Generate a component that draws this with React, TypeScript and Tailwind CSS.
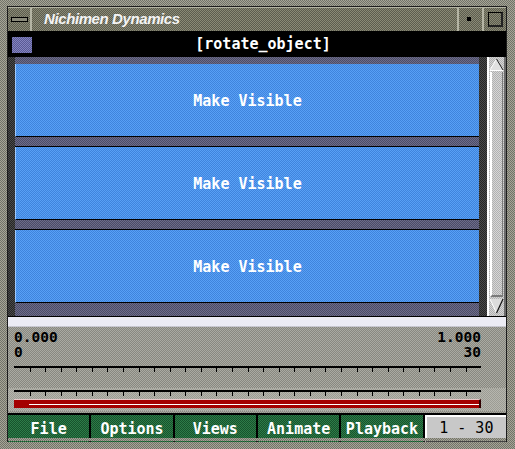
const frameBg =
  "bg-[image:repeating-conic-gradient(#a6a696_0_25%,#72726a_0_50%)] bg-[length:2px_2px]";

const Ruler = () => {
  const ticks = Array.from({ length: 29 }, (_, i) => Math.round((i + 1) * 15.57));
  return (
    <svg width="467" height="6" className="block">
      <rect x="0" y="0" width="467" height="2" fill="#000" />
      {ticks.map((x) => (
        <rect key={x} x={x} y="2" width="1" height="4" fill="#000" />
      ))}
    </svg>
  );
};

const VisibleButton = () => (
  <div className="h-[73px] pt-[3px] border-b border-black border-l border-l-[#9cc8ff] bg-[image:repeating-conic-gradient(#58a0f6_0_25%,#3f84dc_0_50%)] bg-[length:2px_2px] flex items-center justify-center">
    <span className="text-white text-[15px] font-bold font-['DejaVu_Sans_Mono',monospace]">
      Make Visible
    </span>
  </div>
);

const Separator = ({ h }: { h: string }) => (
  <div
    className={`${h} border-b border-black bg-[image:repeating-conic-gradient(#6c6c8a_0_25%,#4c4c66_0_50%)] bg-[length:2px_2px]`}
  />
);

const MenuButton = ({ label }: { label: string }) => (
  <div className="flex items-center justify-center pt-[1px] bg-[image:repeating-conic-gradient(#2e7c48_0_25%,#17522c_0_50%)] bg-[length:2px_2px]">
    <span className="text-white text-[15px] font-bold font-['DejaVu_Sans_Mono',monospace]">
      {label}
    </span>
  </div>
);

export default function App() {
  return (
    <div className={`w-[515px] h-[449px] pt-[6px] pl-[7px] pr-[8px] pb-[7px] ${frameBg}`}>
      <div className="w-[500px] h-[436px] border border-[#1c1c1c] flex flex-col">
        {/* title bar */}
        <div className="h-[24px] flex bg-[image:repeating-conic-gradient(#8a8a76_0_25%,#5c5c4e_0_50%)] bg-[length:2px_2px]">
          <div className="w-[24px] border-r-2 border-r-[#b4b4a4] border-t border-t-[#b4b4a4] flex items-center justify-center">
            <div className="w-[17px] h-[5px] border border-black bg-[#8a8a7a]" />
          </div>
          <div className="flex-1 border-t border-t-[#b4b4a4] pl-[12px] flex items-center">
            <span className="text-[#f4f4f4] text-[15px] font-bold italic font-['Liberation_Sans',Arial,sans-serif] tracking-[-0.4px]">
              Nichimen Dynamics
            </span>
          </div>
          <div className="w-[25px] border-l-2 border-l-[#b4b4a4] border-t border-t-[#b4b4a4] flex items-start justify-center pt-[9px] pr-[4px]">
            <div className="w-[4px] h-[4px] bg-black" />
          </div>
          <div className="w-[24px] border-l-2 border-l-[#b4b4a4] border-t border-t-[#b4b4a4] flex items-center justify-center">
            <div className="w-[15px] h-[15px] border border-black border-r-2 border-b-2 border-r-[#222] border-b-[#222]" />
          </div>
        </div>

        {/* black header */}
        <div className="h-[26px] bg-black flex items-center pt-[1px]">
          <div className="ml-[4px] w-[20px] h-[16px] bg-[image:repeating-conic-gradient(#8484c0_0_25%,#5a5a94_0_50%)] bg-[length:2px_2px]" />
          <div className="flex-1 text-center text-white text-[15px] font-bold font-['DejaVu_Sans_Mono',monospace] pr-[12px]">
            [rotate_object]
          </div>
        </div>

        {/* content */}
        <div className="h-[259px] flex">
          <div className="w-[7px] bg-[image:repeating-conic-gradient(#4a4a4a_0_25%,#262626_0_50%)] bg-[length:2px_2px]" />
          <div className="w-[464px] flex flex-col bg-[image:repeating-conic-gradient(#6c6c8a_0_25%,#4c4c66_0_50%)] bg-[length:2px_2px]">
            <div className="h-[7px]" />
            <VisibleButton />
            <Separator h="h-[10px]" />
            <VisibleButton />
            <Separator h="h-[10px]" />
            <VisibleButton />
            <div className="flex-1" />
          </div>
          <div className="w-[8px] bg-[image:repeating-conic-gradient(#4a4a4a_0_25%,#262626_0_50%)] bg-[length:2px_2px]" />
          <div className="w-[19px] flex flex-col border-l-2 border-l-white border-r-2 border-r-[#6a6a6a] bg-[image:repeating-conic-gradient(#d6d6d6_0_25%,#b0b0b0_0_50%)] bg-[length:2px_2px]">
            <svg width="15" height="14" className="block mt-[1px]">
              <polygon points="7.5,1 1,12 14,12" fill="#e0e0e0" />
              <line x1="7.5" y1="1" x2="1" y2="12" stroke="#fff" strokeWidth="1" />
              <line x1="7.5" y1="1" x2="14" y2="12" stroke="#222" strokeWidth="1" />
              <line x1="1" y1="12.5" x2="14" y2="12.5" stroke="#fff" strokeWidth="1" />
            </svg>
            <div className="flex-1 mx-[1px] border-l-2 border-l-white border-r border-r-[#7a7a7a] border-b-2 border-b-[#7a7a7a]" />
            <svg width="15" height="17" className="block mb-[2px]">
              <polygon points="1,2 14,2 7.5,16" fill="#dcdcdc" />
              <line x1="1" y1="2" x2="7.5" y2="16" stroke="#fff" strokeWidth="1" />
              <line x1="14" y1="2" x2="7.5" y2="16" stroke="#111" strokeWidth="1.2" />
            </svg>
          </div>
        </div>

        {/* white bar */}
        <div className="h-[11px] border-t border-black bg-[#ececf4] border-b border-b-[#c8c8d0]" />

        {/* time panel */}
        <div className="h-[86px] flex flex-col bg-[image:repeating-conic-gradient(#aaaaa2_0_25%,#888880_0_50%)] bg-[length:2px_2px]">
          <div className="h-[32px] pt-[3px] pl-[6px] w-[473px] flex justify-between text-black text-[14.5px] leading-[14.5px] font-bold font-['DejaVu_Sans_Mono',monospace]">
            <div>
              <div>0.000</div>
              <div>0</div>
            </div>
            <div className="text-right">
              <div>1.000</div>
              <div>30</div>
            </div>
          </div>
          <div className="mt-[7px] pl-[6px]">
            <Ruler />
          </div>
          <div className="mt-[16px] h-[23px] pt-[2px] pl-[6px] bg-[image:repeating-conic-gradient(#b6b6ae_0_25%,#9c9c94_0_50%)] bg-[length:2px_2px]">
            <Ruler />
            <div className="mt-[3px] w-[467px] h-[9px] bg-[#a40000] border-t border-t-[#e8c8c8] border-r-2 border-r-[#300000] flex flex-col justify-center">
              <div className="ml-[15px] h-[1px] bg-white" />
            </div>
          </div>
        </div>

        {/* menu */}
        <div className="h-[25px] bg-black pt-[2px] pb-[1px] grid grid-cols-6 gap-x-[2px]">
          <MenuButton label="File" />
          <MenuButton label="Options" />
          <MenuButton label="Views" />
          <MenuButton label="Animate" />
          <MenuButton label="Playback" />
          <div className="flex items-center justify-center bg-[#c8c8c8] border-t-2 border-l-2 border-white border-b-2 border-b-[#444]">
            <span className="text-black text-[15px] font-['DejaVu_Sans_Mono',monospace] whitespace-pre">
              1 - 30
            </span>
          </div>
        </div>
        <div className="flex-1 bg-[image:repeating-conic-gradient(#a6a696_0_25%,#72726a_0_50%)] bg-[length:2px_2px]" />
      </div>
    </div>
  );
}
